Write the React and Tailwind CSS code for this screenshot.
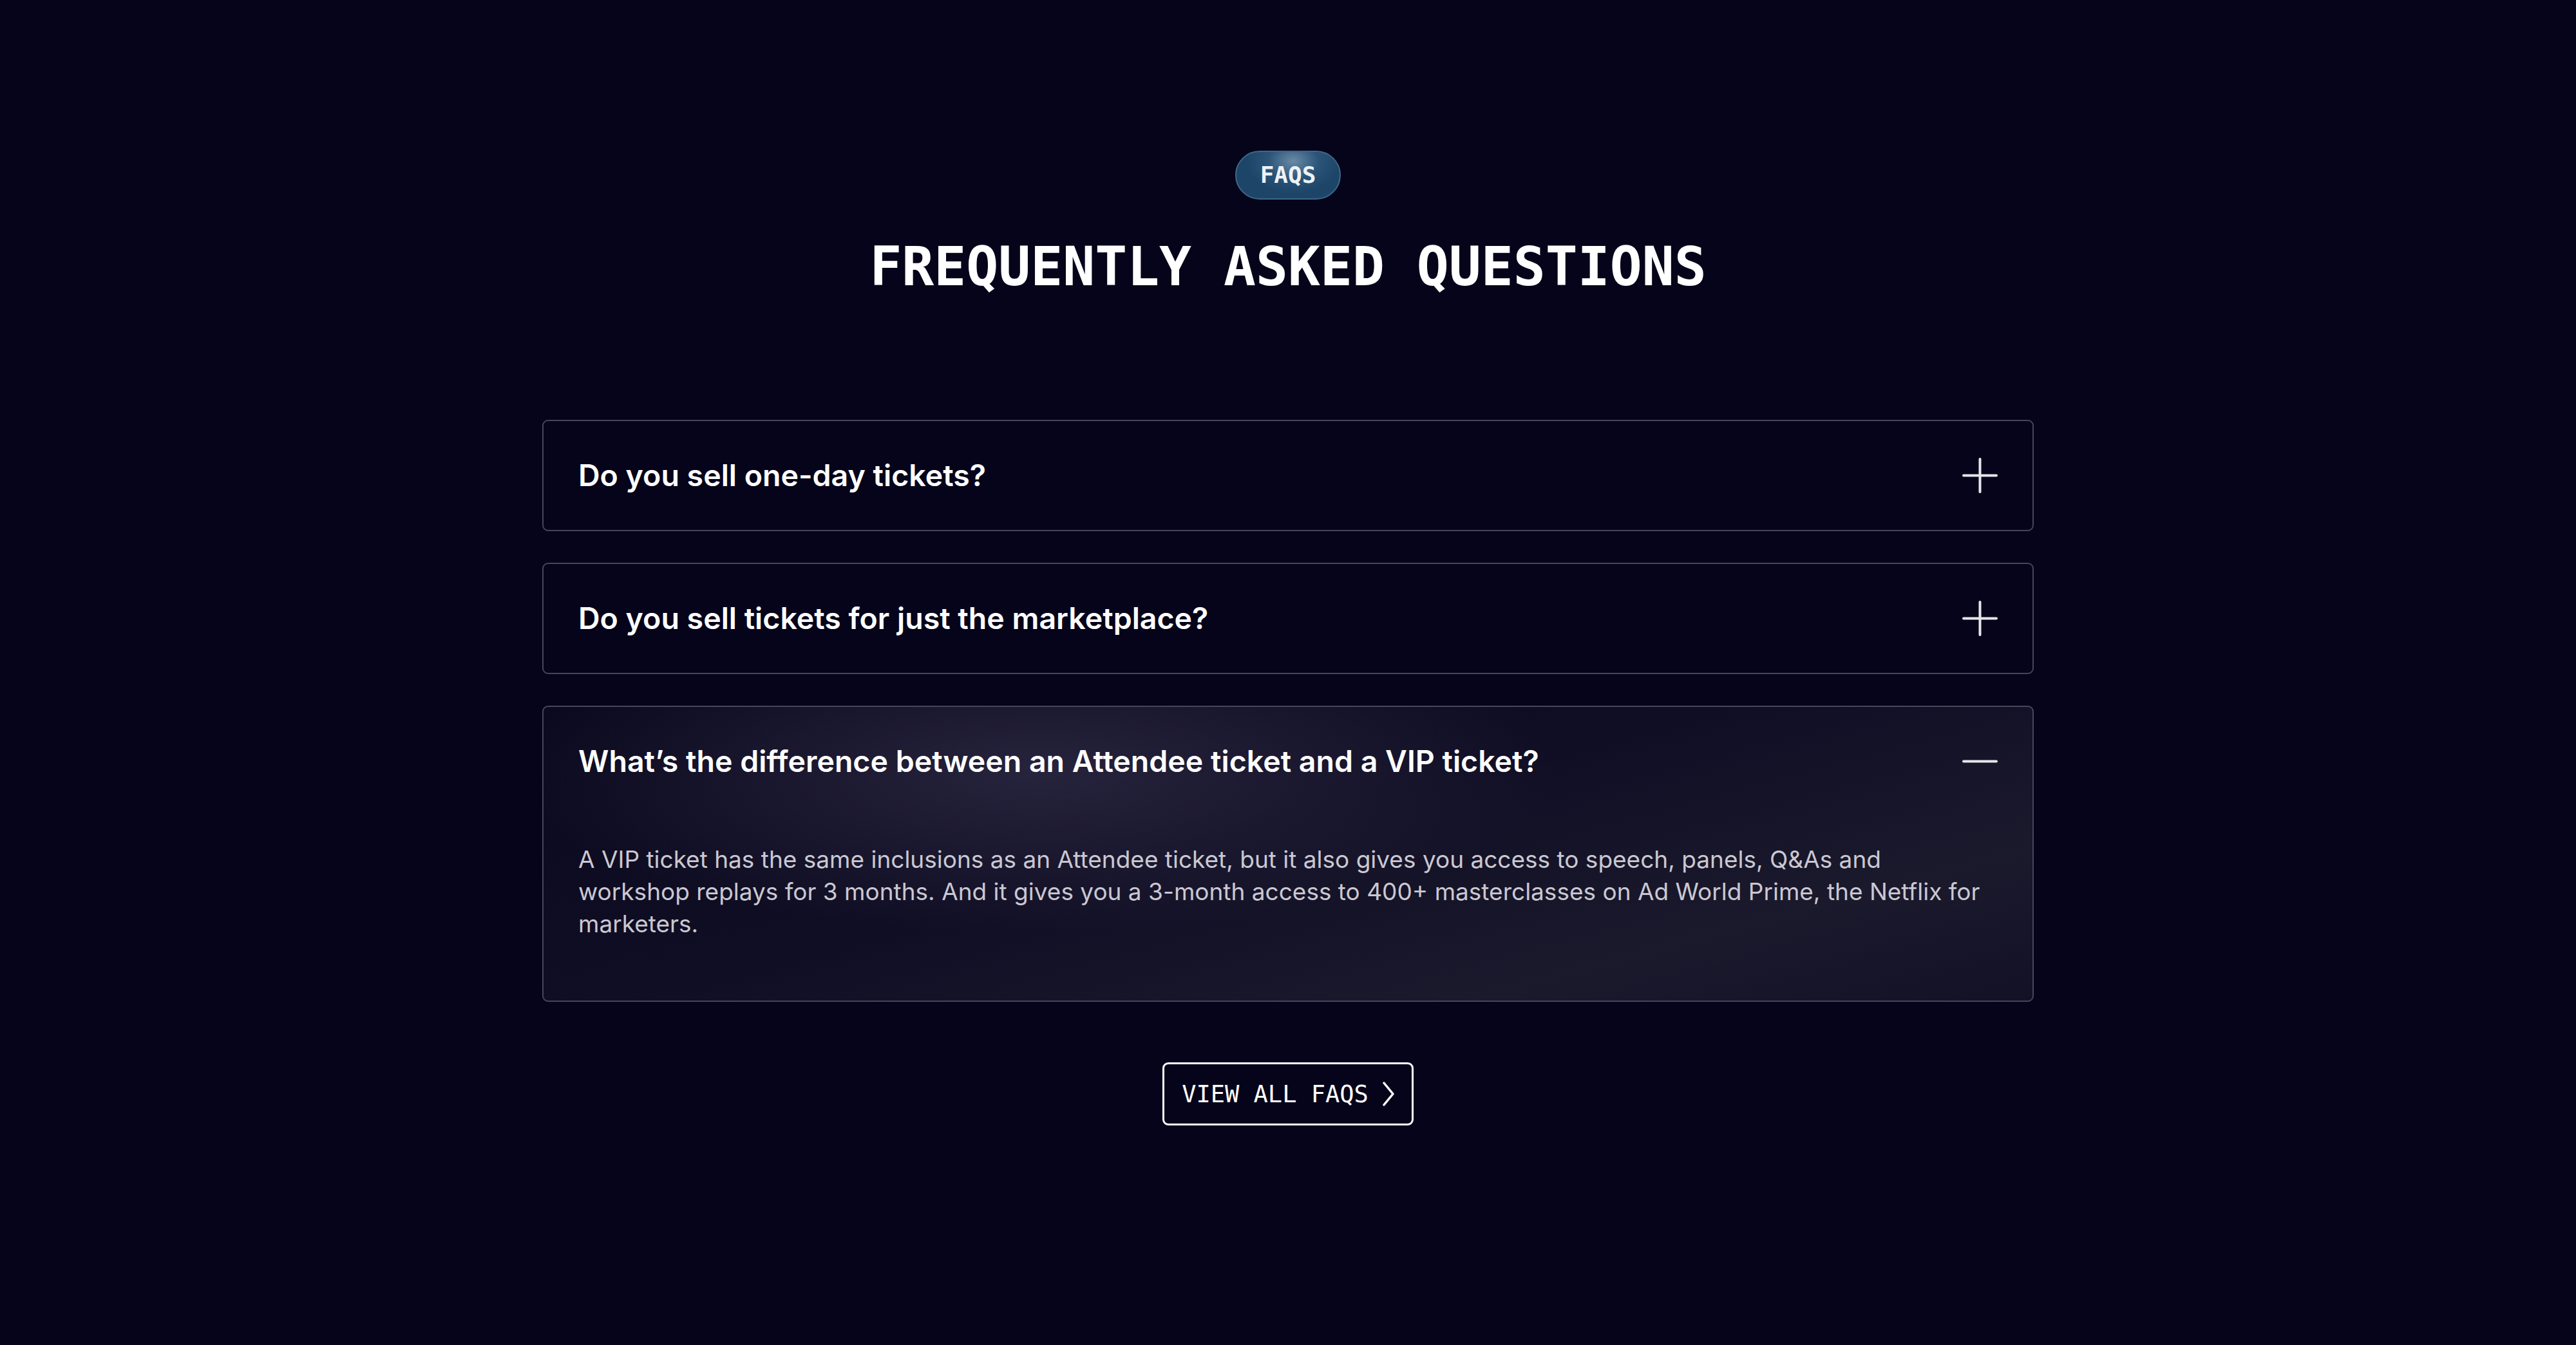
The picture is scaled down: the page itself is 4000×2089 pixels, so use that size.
import { useState } from "react";

const faqs = [
  {
    q: "Do you sell one-day tickets?",
    a: "Yes. One-day tickets are available for each day of the event.",
  },
  {
    q: "Do you sell tickets for just the marketplace?",
    a: "Marketplace-only passes are not sold separately.",
  },
  {
    q: "What’s the difference between an Attendee ticket and a VIP ticket?",
    a: "A VIP ticket has the same inclusions as an Attendee ticket, but it also gives you access to speech, panels, Q&As and workshop replays for 3 months. And it gives you a 3-month access to 400+ masterclasses on Ad World Prime, the Netflix for marketers.",
  },
];

function PlusIcon() {
  return (
    <svg width="55" height="55" viewBox="0 0 55 55" fill="none" stroke="#e6e5ea" strokeWidth="4" strokeLinecap="round">
      <line x1="27.5" y1="2" x2="27.5" y2="53" />
      <line x1="2" y1="27.5" x2="53" y2="27.5" />
    </svg>
  );
}

function MinusIcon() {
  return (
    <svg width="55" height="55" viewBox="0 0 55 55" fill="none" stroke="#e6e5ea" strokeWidth="4" strokeLinecap="round">
      <line x1="2" y1="27.5" x2="53" y2="27.5" />
    </svg>
  );
}

export default function App() {
  const [open, setOpen] = useState(2);

  return (
    <div className="min-h-screen bg-[#06041a] flex flex-col items-center pt-[234px] pb-[200px] font-['Inter',sans-serif]">
      {/* badge */}
      <div className="h-[76px] px-[37px] inline-flex items-center rounded-full border-[2px] border-[#3f6688] bg-[radial-gradient(ellipse_45%_70%_at_55%_20%,#6a8aa6_0%,#2a5478_55%,#1d4568_100%)]">
        <span className="font-['DejaVu_Sans_Mono',monospace] text-[36px] leading-none font-semibold text-[#eef2f6]">
          FAQS
        </span>
      </div>

      <h2 className="mt-[63px] font-['DejaVu_Sans_Mono',monospace] font-bold text-[83px] leading-none text-white">
        FREQUENTLY ASKED QUESTIONS
      </h2>

      {/* accordion */}
      <div className="mt-[196px] w-[2316px] flex flex-col gap-[49px]">
        {faqs.map((f, i) => {
          const isOpen = open === i;
          return (
            <div
              key={i}
              className={`rounded-[9px] border-[2px] border-[#48455a] ${
                isOpen
                  ? "bg-[radial-gradient(ellipse_35%_55%_at_33%_22%,rgba(58,54,82,0.55)_0%,transparent_100%),linear-gradient(165deg,#0b091e_0%,#100e24_45%,#1b192c_78%,#131126_100%)]"
                  : "bg-[#06041a]"
              }`}
            >
              <button
                type="button"
                onClick={() => setOpen(isOpen ? -1 : i)}
                className="w-full h-[169px] px-[54px] flex items-center justify-between text-left"
              >
                <span className="text-[46.5px] font-semibold text-white leading-none">{f.q}</span>
                {isOpen ? <MinusIcon /> : <PlusIcon />}
              </button>
              {isOpen && (
                <div className="px-[54px] pt-[43px] pb-[94px]">
                  <p className="max-w-[2190px] text-[37px] leading-[50px] text-[#cac8d2]">{f.a}</p>
                </div>
              )}
            </div>
          );
        })}
      </div>

      <button
        type="button"
        className="mt-[94px] h-[98px] w-[390px] rounded-[9px] border-[3px] border-white flex items-center justify-center gap-[22px] font-['DejaVu_Sans_Mono',monospace] text-[37px] text-white"
      >
        <span className="leading-none">VIEW ALL FAQS</span>
        <svg width="18" height="38" viewBox="0 0 18 38" fill="none" stroke="white" strokeWidth="3.5" strokeLinecap="round" strokeLinejoin="round">
          <polyline points="2,2 16,19 2,36" />
        </svg>
      </button>
    </div>
  );
}
